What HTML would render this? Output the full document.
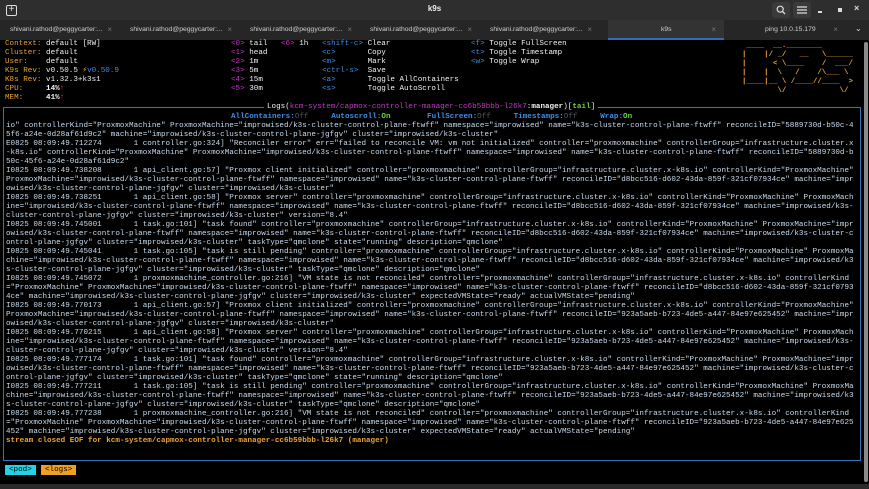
<!DOCTYPE html>
<html><head><meta charset="utf-8"><style>
*{margin:0;padding:0;box-sizing:border-box}
body{width:869px;height:489px;overflow:hidden;background:#000;font-family:"Liberation Sans",sans-serif;position:relative}
.tb{position:absolute;left:0;top:0;width:869px;height:20px;background:#2e2e2e}
.tabs{position:absolute;left:0;top:20px;width:869px;height:20px;background:#262626}
.tab{position:absolute;top:0;height:20px;width:120px;color:#cfcfcf;font-size:6.8px;line-height:20px}
.tab .t{position:absolute;left:10px;white-space:nowrap}
.tab .x{position:absolute;right:8px;color:#777;font-size:8px}
.m{font-family:"Liberation Mono",monospace;font-size:7.6px;line-height:9px;white-space:pre;position:absolute}
.o{color:#e8a33a}.w{color:#f2f2f2}.p{color:#c535c8}.b{color:#3f8ee6}.g{color:#6fcf40}.gr{color:#555}
.log{position:absolute;left:6px;top:122px;font-family:"Liberation Mono",monospace;font-size:7.6px;line-height:9px;color:#cadcee;width:186ch}
.log div{white-space:pre-wrap;word-break:break-all}
</style></head><body>
<div class="tb">
 <div style="position:absolute;left:6px;top:5px;width:11px;height:11px;border:1.3px solid #ddd;border-radius:2px;color:#ddd;font-size:10px;line-height:8px;text-align:center">+</div>
 <div style="position:absolute;left:0;width:869px;top:4px;text-align:center;color:#eee;font-size:8px;font-weight:bold">k9s</div>
 <div style="position:absolute;left:772px;top:2px;width:18px;height:16px;background:#3a3a3a;border-radius:3px"></div>
 <svg style="position:absolute;left:776px;top:5px" width="10" height="10"><circle cx="4.2" cy="4.2" r="3" fill="none" stroke="#ddd" stroke-width="1.2"/><line x1="6.5" y1="6.5" x2="9" y2="9" stroke="#ddd" stroke-width="1.3"/></svg>
 <div style="position:absolute;left:793px;top:2px;width:18px;height:16px;background:#3a3a3a;border-radius:3px"></div>
 <svg style="position:absolute;left:797px;top:6px" width="10" height="8"><path d="M0 1H10M0 4H10M0 7H10" stroke="#ddd" stroke-width="1.2"/></svg>
 <div style="position:absolute;left:818px;top:11px;width:4px;height:1.5px;background:#ddd"></div>
 <div style="position:absolute;left:838px;top:8px;width:4px;height:4px;background:#ddd"></div>
 <div style="position:absolute;left:854px;top:3px;color:#ddd;font-size:9px;font-weight:bold">×</div>
</div>
<div class="tabs">
 <div class="tab" style="left:0"><span class="t">shivani.rathod@peggycarter:...</span><span class="x">×</span></div>
 <div class="tab" style="left:120px"><span class="t">shivani.rathod@peggycarter:...</span><span class="x">×</span></div>
 <div class="tab" style="left:240px"><span class="t">shivani.rathod@peggycarter:...</span><span class="x">×</span></div>
 <div class="tab" style="left:360px"><span class="t">shivani.rathod@peggycarter:...</span><span class="x">×</span></div>
 <div class="tab" style="left:480px"><span class="t">shivani.rathod@peggycarter:...</span><span class="x">×</span></div>
 <div class="tab" style="left:608px;width:116px;background:#333;border-bottom:2px solid #2f6db5"><span class="t" style="left:53px">k9s</span><span class="x">×</span></div>
 <div class="tab" style="left:724px"><span class="t" style="left:41px">ping 10.0.15.179</span><span class="x" style="right:6px">×</span></div>
 <div style="position:absolute;left:855px;top:4px;color:#ddd;font-size:8px">⌄</div>
</div>
<div style="position:absolute;left:864px;top:42px;width:4px;height:440px;background:#8a8a8a;border-radius:2px"></div>
<div style="position:absolute;left:0;top:484px;width:869px;height:5px;background:#2a2a2a"></div>

<div class="m" style="left:5px;top:40px"><span class="o">Context: </span><span class="w">default [RW]</span>
<span class="o">Cluster: </span><span class="w">default</span>
<span class="o">User:    </span><span class="w">default</span>
<span class="o">K9s Rev: </span><span class="w">v0.50.5 </span><span style="color:#f0c020">⚡</span><span class="b">v0.50.9</span>
<span class="o">K8s Rev: </span><span class="w">v1.32.3+k3s1</span>
<span class="o">CPU:     </span><span class="w"><b>14%</b></span><span style="color:#e04040">↑</span>
<span class="o">MEM:     </span><span class="w"><b>41%</b></span><span style="color:#e04040">↑</span></div>
<div class="m" style="left:231px;top:40px"><span class="p">&lt;0&gt;</span> <span class="w">tail</span>
<span class="p">&lt;1&gt;</span> <span class="w">head</span>
<span class="p">&lt;2&gt;</span> <span class="w">1m</span>
<span class="p">&lt;3&gt;</span> <span class="w">5m</span>
<span class="p">&lt;4&gt;</span> <span class="w">15m</span>
<span class="p">&lt;5&gt;</span> <span class="w">30m</span></div>
<div class="m" style="left:281px;top:40px"><span class="p">&lt;6&gt;</span> <span class="w">1h</span></div>
<div class="m" style="left:322px;top:40px"><span class="b">&lt;shift-c&gt;</span> <span class="w">Clear</span>
<span class="b">&lt;c&gt;</span>       <span class="w">Copy</span>
<span class="b">&lt;m&gt;</span>       <span class="w">Mark</span>
<span class="b">&lt;ctrl-s&gt;</span>  <span class="w">Save</span>
<span class="b">&lt;a&gt;</span>       <span class="w">Toggle AllContainers</span>
<span class="b">&lt;s&gt;</span>       <span class="w">Toggle AutoScroll</span></div>
<div class="m" style="left:471px;top:40px"><span class="b">&lt;f&gt;</span> <span class="w">Toggle FullScreen</span>
<span class="b">&lt;t&gt;</span> <span class="w">Toggle Timestamp</span>
<span class="b">&lt;w&gt;</span> <span class="w">Toggle Wrap</span></div>
<div class="m o" style="left:742px;top:42px;font-weight:bold;font-size:7.4px"> ____  __.________
|    |/ _/   __   \______
|      &lt; \____    /  ___/
|    |  \   /    /\___ \
|____|__ \ /____//____  &gt;
        \/            \/</div>

<div style="position:absolute;left:3px;top:107px;width:858px;height:354px;border:1.3px solid #3a72b4"></div>
<div class="m" style="left:264px;top:103px;background:#000;padding:0 3px"><span class="w">Logs(</span><span class="p">kcm-system/capmox-controller-manager-cc6b59bbb-l26k7</span><span class="w">:<b>manager</b>)[</span><span class="g"><b>tail</b></span><span class="w">]</span></div>
<div class="m" style="left:231px;top:113px;font-weight:bold"><span class="b">AllContainers:</span><span class="gr" style="font-weight:normal">Off</span>     <span class="b">Autoscroll:</span><span class="g">On</span>        <span class="b">FullScreen:</span><span class="gr" style="font-weight:normal">Off</span>     <span class="b">Timestamps:</span><span class="gr" style="font-weight:normal">Off</span>     <span class="b">Wrap:</span><span class="g">On</span></div>

<div class="log">
<div>io" controllerKind="ProxmoxMachine" ProxmoxMachine="improwised/k3s-cluster-control-plane-ftwff" namespace="improwised" name="k3s-cluster-control-plane-ftwff" reconcileID="5889730d-b50c-45f6-a24e-0d28af61d9c2" machine="improwised/k3s-cluster-control-plane-jgfgv" cluster="improwised/k3s-cluster"</div>
<div>E0825 08:09:49.712274       1 controller.go:324] "Reconciler error" err="failed to reconcile VM: vm not initialized" controller="proxmoxmachine" controllerGroup="infrastructure.cluster.x-k8s.io" controllerKind="ProxmoxMachine" ProxmoxMachine="improwised/k3s-cluster-control-plane-ftwff" namespace="improwised" name="k3s-cluster-control-plane-ftwff" reconcileID="5889730d-b50c-45f6-a24e-0d28af61d9c2"</div>
<div>I0825 08:09:49.738208       1 api_client.go:57] "Proxmox client initialized" controller="proxmoxmachine" controllerGroup="infrastructure.cluster.x-k8s.io" controllerKind="ProxmoxMachine" ProxmoxMachine="improwised/k3s-cluster-control-plane-ftwff" namespace="improwised" name="k3s-cluster-control-plane-ftwff" reconcileID="d8bcc516-d602-43da-859f-321cf07934ce" machine="improwised/k3s-cluster-control-plane-jgfgv" cluster="improwised/k3s-cluster"</div>
<div>I0825 08:09:49.738251       1 api_client.go:58] "Proxmox server" controller="proxmoxmachine" controllerGroup="infrastructure.cluster.x-k8s.io" controllerKind="ProxmoxMachine" ProxmoxMachine="improwised/k3s-cluster-control-plane-ftwff" namespace="improwised" name="k3s-cluster-control-plane-ftwff" reconcileID="d8bcc516-d602-43da-859f-321cf07934ce" machine="improwised/k3s-cluster-control-plane-jgfgv" cluster="improwised/k3s-cluster" version="8.4"</div>
<div>I0825 08:09:49.745001       1 task.go:101] "task found" controller="proxmoxmachine" controllerGroup="infrastructure.cluster.x-k8s.io" controllerKind="ProxmoxMachine" ProxmoxMachine="improwised/k3s-cluster-control-plane-ftwff" namespace="improwised" name="k3s-cluster-control-plane-ftwff" reconcileID="d8bcc516-d602-43da-859f-321cf07934ce" machine="improwised/k3s-cluster-control-plane-jgfgv" cluster="improwised/k3s-cluster" taskType="qmclone" state="running" description="qmclone"</div>
<div>I0825 08:09:49.745041       1 task.go:105] "task is still pending" controller="proxmoxmachine" controllerGroup="infrastructure.cluster.x-k8s.io" controllerKind="ProxmoxMachine" ProxmoxMachine="improwised/k3s-cluster-control-plane-ftwff" namespace="improwised" name="k3s-cluster-control-plane-ftwff" reconcileID="d8bcc516-d602-43da-859f-321cf07934ce" machine="improwised/k3s-cluster-control-plane-jgfgv" cluster="improwised/k3s-cluster" taskType="qmclone" description="qmclone"</div>
<div>I0825 08:09:49.745072       1 proxmoxmachine_controller.go:216] "VM state is not reconciled" controller="proxmoxmachine" controllerGroup="infrastructure.cluster.x-k8s.io" controllerKind="ProxmoxMachine" ProxmoxMachine="improwised/k3s-cluster-control-plane-ftwff" namespace="improwised" name="k3s-cluster-control-plane-ftwff" reconcileID="d8bcc516-d602-43da-859f-321cf07934ce" machine="improwised/k3s-cluster-control-plane-jgfgv" cluster="improwised/k3s-cluster" expectedVMState="ready" actualVMState="pending"</div>
<div>I0825 08:09:49.770173       1 api_client.go:57] "Proxmox client initialized" controller="proxmoxmachine" controllerGroup="infrastructure.cluster.x-k8s.io" controllerKind="ProxmoxMachine" ProxmoxMachine="improwised/k3s-cluster-control-plane-ftwff" namespace="improwised" name="k3s-cluster-control-plane-ftwff" reconcileID="923a5aeb-b723-4de5-a447-84e97e625452" machine="improwised/k3s-cluster-control-plane-jgfgv" cluster="improwised/k3s-cluster"</div>
<div>I0825 08:09:49.770215       1 api_client.go:58] "Proxmox server" controller="proxmoxmachine" controllerGroup="infrastructure.cluster.x-k8s.io" controllerKind="ProxmoxMachine" ProxmoxMachine="improwised/k3s-cluster-control-plane-ftwff" namespace="improwised" name="k3s-cluster-control-plane-ftwff" reconcileID="923a5aeb-b723-4de5-a447-84e97e625452" machine="improwised/k3s-cluster-control-plane-jgfgv" cluster="improwised/k3s-cluster" version="8.4"</div>
<div>I0825 08:09:49.777174       1 task.go:101] "task found" controller="proxmoxmachine" controllerGroup="infrastructure.cluster.x-k8s.io" controllerKind="ProxmoxMachine" ProxmoxMachine="improwised/k3s-cluster-control-plane-ftwff" namespace="improwised" name="k3s-cluster-control-plane-ftwff" reconcileID="923a5aeb-b723-4de5-a447-84e97e625452" machine="improwised/k3s-cluster-control-plane-jgfgv" cluster="improwised/k3s-cluster" taskType="qmclone" state="running" description="qmclone"</div>
<div>I0825 08:09:49.777211       1 task.go:105] "task is still pending" controller="proxmoxmachine" controllerGroup="infrastructure.cluster.x-k8s.io" controllerKind="ProxmoxMachine" ProxmoxMachine="improwised/k3s-cluster-control-plane-ftwff" namespace="improwised" name="k3s-cluster-control-plane-ftwff" reconcileID="923a5aeb-b723-4de5-a447-84e97e625452" machine="improwised/k3s-cluster-control-plane-jgfgv" cluster="improwised/k3s-cluster" taskType="qmclone" description="qmclone"</div>
<div>I0825 08:09:49.777238       1 proxmoxmachine_controller.go:216] "VM state is not reconciled" controller="proxmoxmachine" controllerGroup="infrastructure.cluster.x-k8s.io" controllerKind="ProxmoxMachine" ProxmoxMachine="improwised/k3s-cluster-control-plane-ftwff" namespace="improwised" name="k3s-cluster-control-plane-ftwff" reconcileID="923a5aeb-b723-4de5-a447-84e97e625452" machine="improwised/k3s-cluster-control-plane-jgfgv" cluster="improwised/k3s-cluster" expectedVMState="ready" actualVMState="pending"</div>
<div class="o" style="font-weight:bold">stream closed EOF for kcm-system/capmox-controller-manager-cc6b59bbb-l26k7 (manager)</div>
</div>

<div class="m" style="left:5px;top:465px;background:#22d3e6;color:#000;padding:0 4px;line-height:10px">&lt;pod&gt;</div>
<div class="m" style="left:41px;top:465px;background:#f0a020;color:#000;padding:0 4px;line-height:10px">&lt;logs&gt;</div>
</body></html>
